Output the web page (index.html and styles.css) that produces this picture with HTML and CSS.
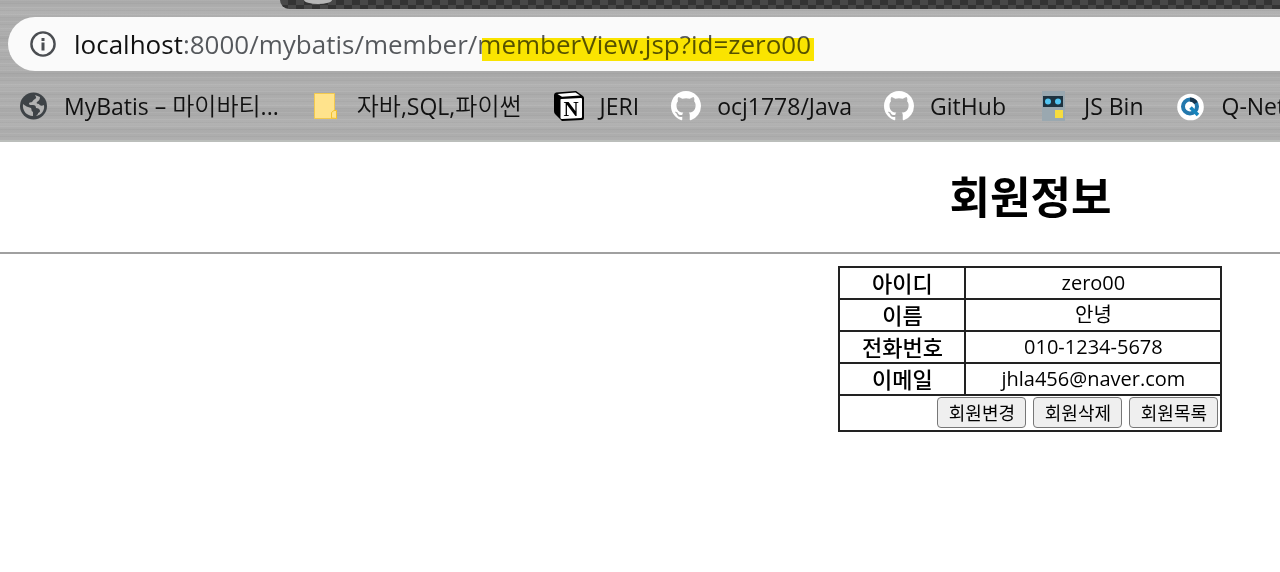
FILE: index.html
```html
<!DOCTYPE html>
<html lang="ko">
<head>
  <meta charset="UTF-8">
  <meta name="viewport" content="width=device-width, initial-scale=1.0">
  <title>회원정보</title>
  <link rel="stylesheet" href="styles.css">
</head>
<body>
  <header class="browser">
    <div class="tab-strip">
      <div class="tabs"><span class="tab-icon"></span></div>
    </div>
    <div class="address">
      <svg class="info" viewBox="0 0 26 26" aria-hidden="true">
        <circle cx="13" cy="13" r="11.6" fill="none" stroke="#4a4d51" stroke-width="2.4"/>
        <rect x="11.5" y="7" width="3" height="3" fill="#4a4d51"/>
        <rect x="11.5" y="11.5" width="3" height="8" fill="#4a4d51"/>
      </svg>
      <input type="text" aria-label="주소" value="localhost:8000/mybatis/member/memberView.jsp?id=zero00">
      <span class="highlight"></span>
    </div>
    <nav class="bookmarks">
      <a href="#">
        <svg viewBox="0 0 30 30" aria-hidden="true">
          <circle cx="15.5" cy="15" r="13.5" fill="#3e4347"/>
          <path d="M17 4C18 6 19 7 17 8C15 9 15 10 14 11C12 12 11 11 11 13C11 14 13 14 15 14C17 14 18 15 18 17C20 17 22 18 22 20C22 22 20 21 20 23L18 25C23 24 27 20 26 14C24 15 22 15 21 13C19 13 18 12 19 11C21 10 22 8 22 6Z" fill="#b2b2b2"/>
          <path d="M5 13C7 15 10 16 13 17C14 19 13 20 15 21L15 25C9 25 4 20 5 13Z" fill="#b2b2b2"/>
        </svg>
        <span>MyBatis – <span class="ko">마이바티</span>...</span>
      </a>
      <a href="#">
        <svg viewBox="0 0 30 30" aria-hidden="true">
          <path d="M3.5 2.5H23.5V19.5H25.5V27.5H3.5Z" fill="#ffe38c" stroke="#f2c94e"/>
          <path d="M20.5 27V21.5L23 19.5H25.5V27.5Z" fill="#ffe38c" stroke="#f2c12e"/>
        </svg>
        <span><span class="ko">자바</span>,SQL,<span class="ko">파이썬</span></span>
      </a>
      <a href="#">
        <svg viewBox="0 0 30 30" aria-hidden="true">
          <path d="M2 1.5L22 0L29 5Q30 6 30 7V27Q30 29 28 29L8 30L1 23Q0 22 0 20V4Q0 2 2 1.5Z" fill="#000"/>
          <path d="M3.5 3L21.5 1.5L26 4.5L8 5.7Z" fill="#fff"/>
          <path d="M6.5 8.5Q6.5 8 7.5 8L27 7Q28 7 28 8V26Q28 27 27 27L8 28Q6.5 28 6.5 27Z" fill="#fff"/>
          <text class="notion-letter" x="17" y="25" text-anchor="middle">N</text>
        </svg>
        <span>JERI</span>
      </a>
      <a href="#">
        <svg viewBox="0 0 16 16" aria-hidden="true">
          <path fill="#fff" d="M8 0C3.58 0 0 3.58 0 8c0 3.54 2.29 6.53 5.47 7.59.4.07.55-.17.55-.38 0-.19-.01-.82-.01-1.49-2.01.37-2.53-.49-2.69-.94-.09-.23-.48-.94-.82-1.13-.28-.15-.68-.52-.01-.53.63-.01 1.08.58 1.23.82.72 1.21 1.87.87 2.33.66.07-.52.28-.87.51-1.07-1.78-.2-3.64-.89-3.64-3.95 0-.87.31-1.59.82-2.15-.08-.2-.36-1.02.08-2.12 0 0 .67-.21 2.2.82.64-.18 1.32-.27 2-.27s1.36.09 2 .27c1.53-1.04 2.2-.82 2.2-.82.44 1.1.16 1.92.08 2.12.51.56.82 1.27.82 2.15 0 3.07-1.87 3.75-3.65 3.95.29.25.54.73.54 1.48 0 1.07-.01 1.93-.01 2.2 0 .21.15.46.55.38A8.01 8.01 0 0 0 16 8c0-4.42-3.58-8-8-8z"/>
        </svg>
        <span>ocj1778/Java</span>
      </a>
      <a href="#">
        <svg viewBox="0 0 16 16" aria-hidden="true">
          <path fill="#fff" d="M8 0C3.58 0 0 3.58 0 8c0 3.54 2.29 6.53 5.47 7.59.4.07.55-.17.55-.38 0-.19-.01-.82-.01-1.49-2.01.37-2.53-.49-2.69-.94-.09-.23-.48-.94-.82-1.13-.28-.15-.68-.52-.01-.53.63-.01 1.08.58 1.23.82.72 1.21 1.87.87 2.33.66.07-.52.28-.87.51-1.07-1.78-.2-3.64-.89-3.64-3.95 0-.87.31-1.59.82-2.15-.08-.2-.36-1.02.08-2.12 0 0 .67-.21 2.2.82.64-.18 1.32-.27 2-.27s1.36.09 2 .27c1.53-1.04 2.2-.82 2.2-.82.44 1.1.16 1.92.08 2.12.51.56.82 1.27.82 2.15 0 3.07-1.87 3.75-3.65 3.95.29.25.54.73.54 1.48 0 1.07-.01 1.93-.01 2.2 0 .21.15.46.55.38A8.01 8.01 0 0 0 16 8c0-4.42-3.58-8-8-8z"/>
        </svg>
        <span>GitHub</span>
      </a>
      <a href="#">
        <svg viewBox="0 0 30 30" aria-hidden="true">
          <rect x="4" y="0" width="23" height="30" fill="#9aa8b0"/>
          <rect x="5" y="5" width="20" height="11" fill="#1f3340"/>
          <circle cx="10" cy="10.5" r="3" fill="#52c5f2"/>
          <circle cx="20" cy="10.5" r="3" fill="#52c5f2"/>
          <rect x="17" y="19" width="8" height="8" fill="#f7dc3e"/>
        </svg>
        <span>JS Bin</span>
      </a>
      <a href="#">
        <svg viewBox="0 0 30 30" aria-hidden="true">
          <circle cx="14.5" cy="16" r="13.3" fill="#fff"/>
          <circle cx="14" cy="15.5" r="7" fill="none" stroke="#2378ad" stroke-width="4"/>
          <path d="M14 8.5A7 7 0 0 1 20 12" fill="none" stroke="#17364e" stroke-width="4"/>
          <path d="M14.5 16.5L22 24" stroke="#1685bd" stroke-width="3.5"/>
        </svg>
        <span>Q-Net</span>
      </a>
    </nav>
  </header>

  <main>
    <h1>회원정보</h1>
    <hr>
    <div class="member">
      <table>
        <tr>
          <th scope="row">아이디</th>
          <td>zero00</td>
        </tr>
        <tr>
          <th scope="row">이름</th>
          <td>안녕</td>
        </tr>
        <tr>
          <th scope="row">전화번호</th>
          <td>010-1234-5678</td>
        </tr>
        <tr>
          <th scope="row">이메일</th>
          <td>jhla456@naver.com</td>
        </tr>
        <tr>
          <td colspan="2">
            <div class="actions">
              <button type="button">회원변경</button>
              <button type="button">회원삭제</button>
              <button type="button">회원목록</button>
            </div>
          </td>
        </tr>
      </table>
    </div>
  </main>
</body>
</html>
```
FILE: styles.css
```css
* {
  margin: 0;
  padding: 0;
  box-sizing: border-box;
}

body {
  font-family: 'Open Sans', 'Noto Sans CJK KR', sans-serif;
  background-color: #fff;
  color: #000;
}

/* brushed metal browser frame */
.browser {
  background:
    repeating-linear-gradient(rgba(255, 255, 255, 0.07) 0 1px, transparent 1px 3px, rgba(0, 0, 0, 0.03) 3px 4px, transparent 4px 7px),
    repeating-linear-gradient(#a8a8a8 0, #b2b2b2 13px, #ababab 19px, #b0b0b0 31px, #a8a8a8 37px);
  border-bottom: 2px solid #bbbebb;
}

.tab-strip {
  padding-left: 280px;
}

.tabs {
  height: 9px;
  padding-left: 24px;
  overflow: hidden;
  border-bottom-left-radius: 9px;
  background: repeating-conic-gradient(#333 0 25%, #484848 0 50%) 0 0 / 16px 10px;
}

.tab-icon {
  display: block;
  width: 28px;
  height: 4px;
  border-radius: 0 0 50% 50% / 0 0 100% 100%;
  background-color: #b5b5b5;
}

.address {
  position: relative;
  display: flex;
  align-items: center;
  gap: 18px;
  height: 54px;
  margin: 8px 0 0 8px;
  padding-left: 22px;
  border-radius: 27px 0 0 27px;
  background-color: #fafafa;
}

.info {
  flex: none;
  width: 26px;
  height: 26px;
}

.address input {
  flex: 1;
  height: 40px;
  border: none;
  outline: none;
  font-family: inherit;
  font-size: 26px;
  color: #55585c;
  /* host name darker than the rest of the url */
  background: linear-gradient(90deg, #111 108px, #55585c 108px);
  -webkit-background-clip: text;
  background-clip: text;
  -webkit-text-fill-color: transparent;
}

.highlight {
  position: absolute;
  left: 474px;
  top: 21px;
  width: 332px;
  height: 23px;
  background-color: #ffe900;
  mix-blend-mode: multiply;
}

.bookmarks {
  display: flex;
  align-items: center;
  gap: 32px;
  height: 69px;
  padding-left: 18px;
  overflow: hidden;
}

.bookmarks a {
  flex: none;
  display: flex;
  align-items: center;
  gap: 16px;
  font-size: 23px;
  line-height: 32px;
  color: #111;
  text-decoration: none;
  white-space: nowrap;
}

.bookmarks svg {
  width: 30px;
  height: 30px;
}

.ko {
  font-size: 24px;
  font-weight: 350;
}

.notion-letter {
  font: bold 21px 'Liberation Serif', serif;
}

/* title and table share a centre line in the right part of the page */
h1,
.member {
  padding-left: 61%;
}

h1 {
  padding-top: 22px;
  font-size: 44px;
  line-height: 66px;
  text-align: center;
}

hr {
  margin: 22px 0 12px;
  border: none;
  border-top: 2px solid #a0a0a0;
}

table {
  width: 384px;
  margin: 0 auto;
  border-collapse: collapse;
  font-size: 20px;
  line-height: 30px;
  text-align: center;
}

th,
td {
  border: 2px solid #222;
}

th {
  width: 126px;
  font-size: 22px;
  font-weight: 500;
}

.actions {
  display: flex;
  justify-content: flex-end;
  gap: 7px;
  padding: 1px 2px 2px;
}

button {
  width: 89px;
  height: 31px;
  border: 1px solid #777;
  border-radius: 4px;
  background-color: #efefef;
  font-family: inherit;
  font-size: 18px;
  line-height: 24px;
  color: #000;
}
```
